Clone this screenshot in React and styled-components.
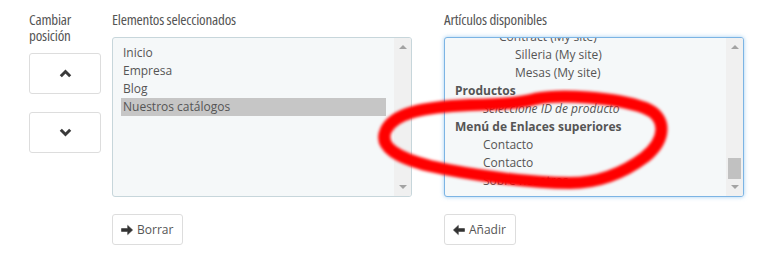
import React from 'react';
import styled, { createGlobalStyle } from 'styled-components';

const GlobalStyle = createGlobalStyle`
  body {
    margin: 0;
    background: #fff;
    font-family: "Open Sans", "DejaVu Sans", sans-serif;
    color: #555;
  }
`;

const Page = styled.div`
  position: relative;
  width: 775px;
  height: 257px;
  display: flex;
  padding: 11px 0 0 29px;
  box-sizing: border-box;
`;

const Column = styled.div`
  display: flex;
  flex-direction: column;
  width: ${p => p.$width}px;
  margin-left: ${p => p.$gap || 0}px;
`;

const Label = styled.div`
  font-family: "Open Sans", "DejaVu Sans Condensed", sans-serif;
  font-stretch: 75%;
  font-size: 15px;
  line-height: 16px;
  letter-spacing: -0.2px;
  color: #555;
  height: ${p => p.$lines * 16}px;
`;

const MoveButton = styled.button`
  width: 72px;
  height: 41px;
  margin-top: ${p => p.$top}px;
  background: #fff;
  border: 1px solid #ddd;
  border-radius: 3px;
  display: flex;
  align-items: center;
  justify-content: center;
  padding: 0;
`;

const ListBox = styled.div`
  margin-top: 10px;
  height: 160px;
  box-sizing: border-box;
  display: flex;
  background: #f5f8f9;
  border: 1px solid ${p => (p.$focus ? '#7cb4e4' : '#c7d6db')};
  border-radius: 3px;
  box-shadow: ${p => (p.$focus ? '0 0 4px rgba(102, 175, 233, 0.6)' : 'none')};
  overflow: hidden;
`;

const Options = styled.div`
  flex: 1;
  padding: 6px 8px 0 8px;
  overflow: hidden;
`;

const OptionList = styled.div`
  margin-top: ${p => p.$offset || 0}px;
`;

const Option = styled.div`
  height: 18px;
  line-height: 18px;
  font-size: 12px;
  white-space: nowrap;
  padding-left: ${p => 2 + (p.$indent || 0)}px;
  font-weight: ${p => (p.$bold ? 700 : 400)};
  font-style: ${p => (p.$italic ? 'italic' : 'normal')};
  background: ${p => (p.$selected ? '#c6c6c6' : 'transparent')};
  color: #555;
`;

const ScrollTrack = styled.div`
  width: 17px;
  background: #f0f0f0;
  position: relative;
  display: flex;
  flex-direction: column;
  justify-content: space-between;
  align-items: center;
  padding: 7px 0;
  box-sizing: border-box;
`;

const Arrow = styled.div`
  width: 0;
  height: 0;
  border-left: 4px solid transparent;
  border-right: 4px solid transparent;
  ${p => (p.$down ? 'border-top: 4px solid #a3a3a3;' : 'border-bottom: 4px solid #a3a3a3;')}
`;

const Thumb = styled.div`
  position: absolute;
  left: 2px;
  right: 2px;
  top: 120px;
  height: 21px;
  background: #c1c1c1;
`;

const ActionButton = styled.button`
  margin-top: 17px;
  align-self: flex-start;
  height: 31px;
  box-sizing: border-box;
  padding: 0 9px 0 8px;
  background: #fff;
  border: 1px solid #ddd;
  border-radius: 3px;
  display: flex;
  align-items: center;
  gap: 4px;
  font-family: "Open Sans", sans-serif;
  font-size: 12px;
  color: #555;
`;

const Annotation = styled.svg`
  position: absolute;
  left: 0;
  top: 0;
  pointer-events: none;
`;

const Chevron = ({ down }) => (
  <svg width="13" height="9" viewBox="0 0 13 9">
    <polyline
      points={down ? '1.8,1.8 6.5,6.5 11.2,1.8' : '1.8,7.2 6.5,2.5 11.2,7.2'}
      fill="none"
      stroke="#3a3a3a"
      strokeWidth="3"
    />
  </svg>
);

const ArrowIcon = ({ left }) => (
  <svg width="12" height="12" viewBox="0 0 12 12" style={left ? { transform: 'scaleX(-1)' } : undefined}>
    <path d="M0.5 4.6h6.2V1.4L11.6 6l-4.9 4.6V7.4H0.5z" fill="#333" strokeLinejoin="round" stroke="#333" strokeWidth="0.6" />
  </svg>
);

const Scrollbar = ({ thumb }) => (
  <ScrollTrack>
    <Arrow />
    {thumb && <Thumb />}
    <Arrow $down />
  </ScrollTrack>
);

const selected = ['Inicio', 'Empresa', 'Blog', 'Nuestros catálogos'];

const available = [
  { text: 'Contract (My site)', indent: 44 },
  { text: 'Silleria (My site)', indent: 60 },
  { text: 'Mesas (My site)', indent: 60 },
  { text: 'Productos', bold: true },
  { text: 'Seleccione ID de producto', indent: 28, italic: true },
  { text: 'Menú de Enlaces superiores', bold: true },
  { text: 'Contacto', indent: 28 },
  { text: 'Contacto', indent: 28 },
  { text: 'Sobre nosotros', indent: 28 },
];

export default function App() {
  return (
    <>
      <GlobalStyle />
      <Page>
        <Column $width={72}>
          <Label $lines={2}>Cambiar<br />posición</Label>
          <MoveButton $top={10}><Chevron /></MoveButton>
          <MoveButton $top={18}><Chevron down /></MoveButton>
        </Column>

        <Column $width={300} $gap={11}>
          <Label $lines={1}>Elementos seleccionados</Label>
          <ListBox>
            <Options>
              <OptionList>
                {selected.map((item, i) => (
                  <Option key={item} $selected={i === selected.length - 1}>{item}</Option>
                ))}
              </OptionList>
            </Options>
            <Scrollbar />
          </ListBox>
          <ActionButton><ArrowIcon />Borrar</ActionButton>
        </Column>

        <Column $width={300} $gap={32}>
          <Label $lines={1}>Artículos disponibles</Label>
          <ListBox $focus>
            <Options>
              <OptionList $offset={-16}>
                {available.map((item, i) => (
                  <Option key={i} $indent={item.indent} $bold={item.bold} $italic={item.italic}>
                    {item.text}
                  </Option>
                ))}
              </OptionList>
            </Options>
            <Scrollbar thumb />
          </ListBox>
          <ActionButton><ArrowIcon left />Añadir</ActionButton>
        </Column>

        <Annotation width="775" height="257" viewBox="0 0 775 257">
          <defs>
            <filter id="soft" x="-10%" y="-10%" width="120%" height="120%">
              <feGaussianBlur stdDeviation="1.4" />
            </filter>
          </defs>
          <path
            d="M470 105 C505 104 520 103 535 99 C560 94 615 97 645 108 C668 117 666 140 645 157 C625 172 600 183 570 183 C530 183 470 175 430 166 C398 158 378 147 386 130 C394 114 420 107 470 105"
            fill="none"
            stroke="#ff0000"
            strokeWidth="12"
            strokeLinecap="round"
            filter="url(#soft)"
          />
        </Annotation>
      </Page>
    </>
  );
}
